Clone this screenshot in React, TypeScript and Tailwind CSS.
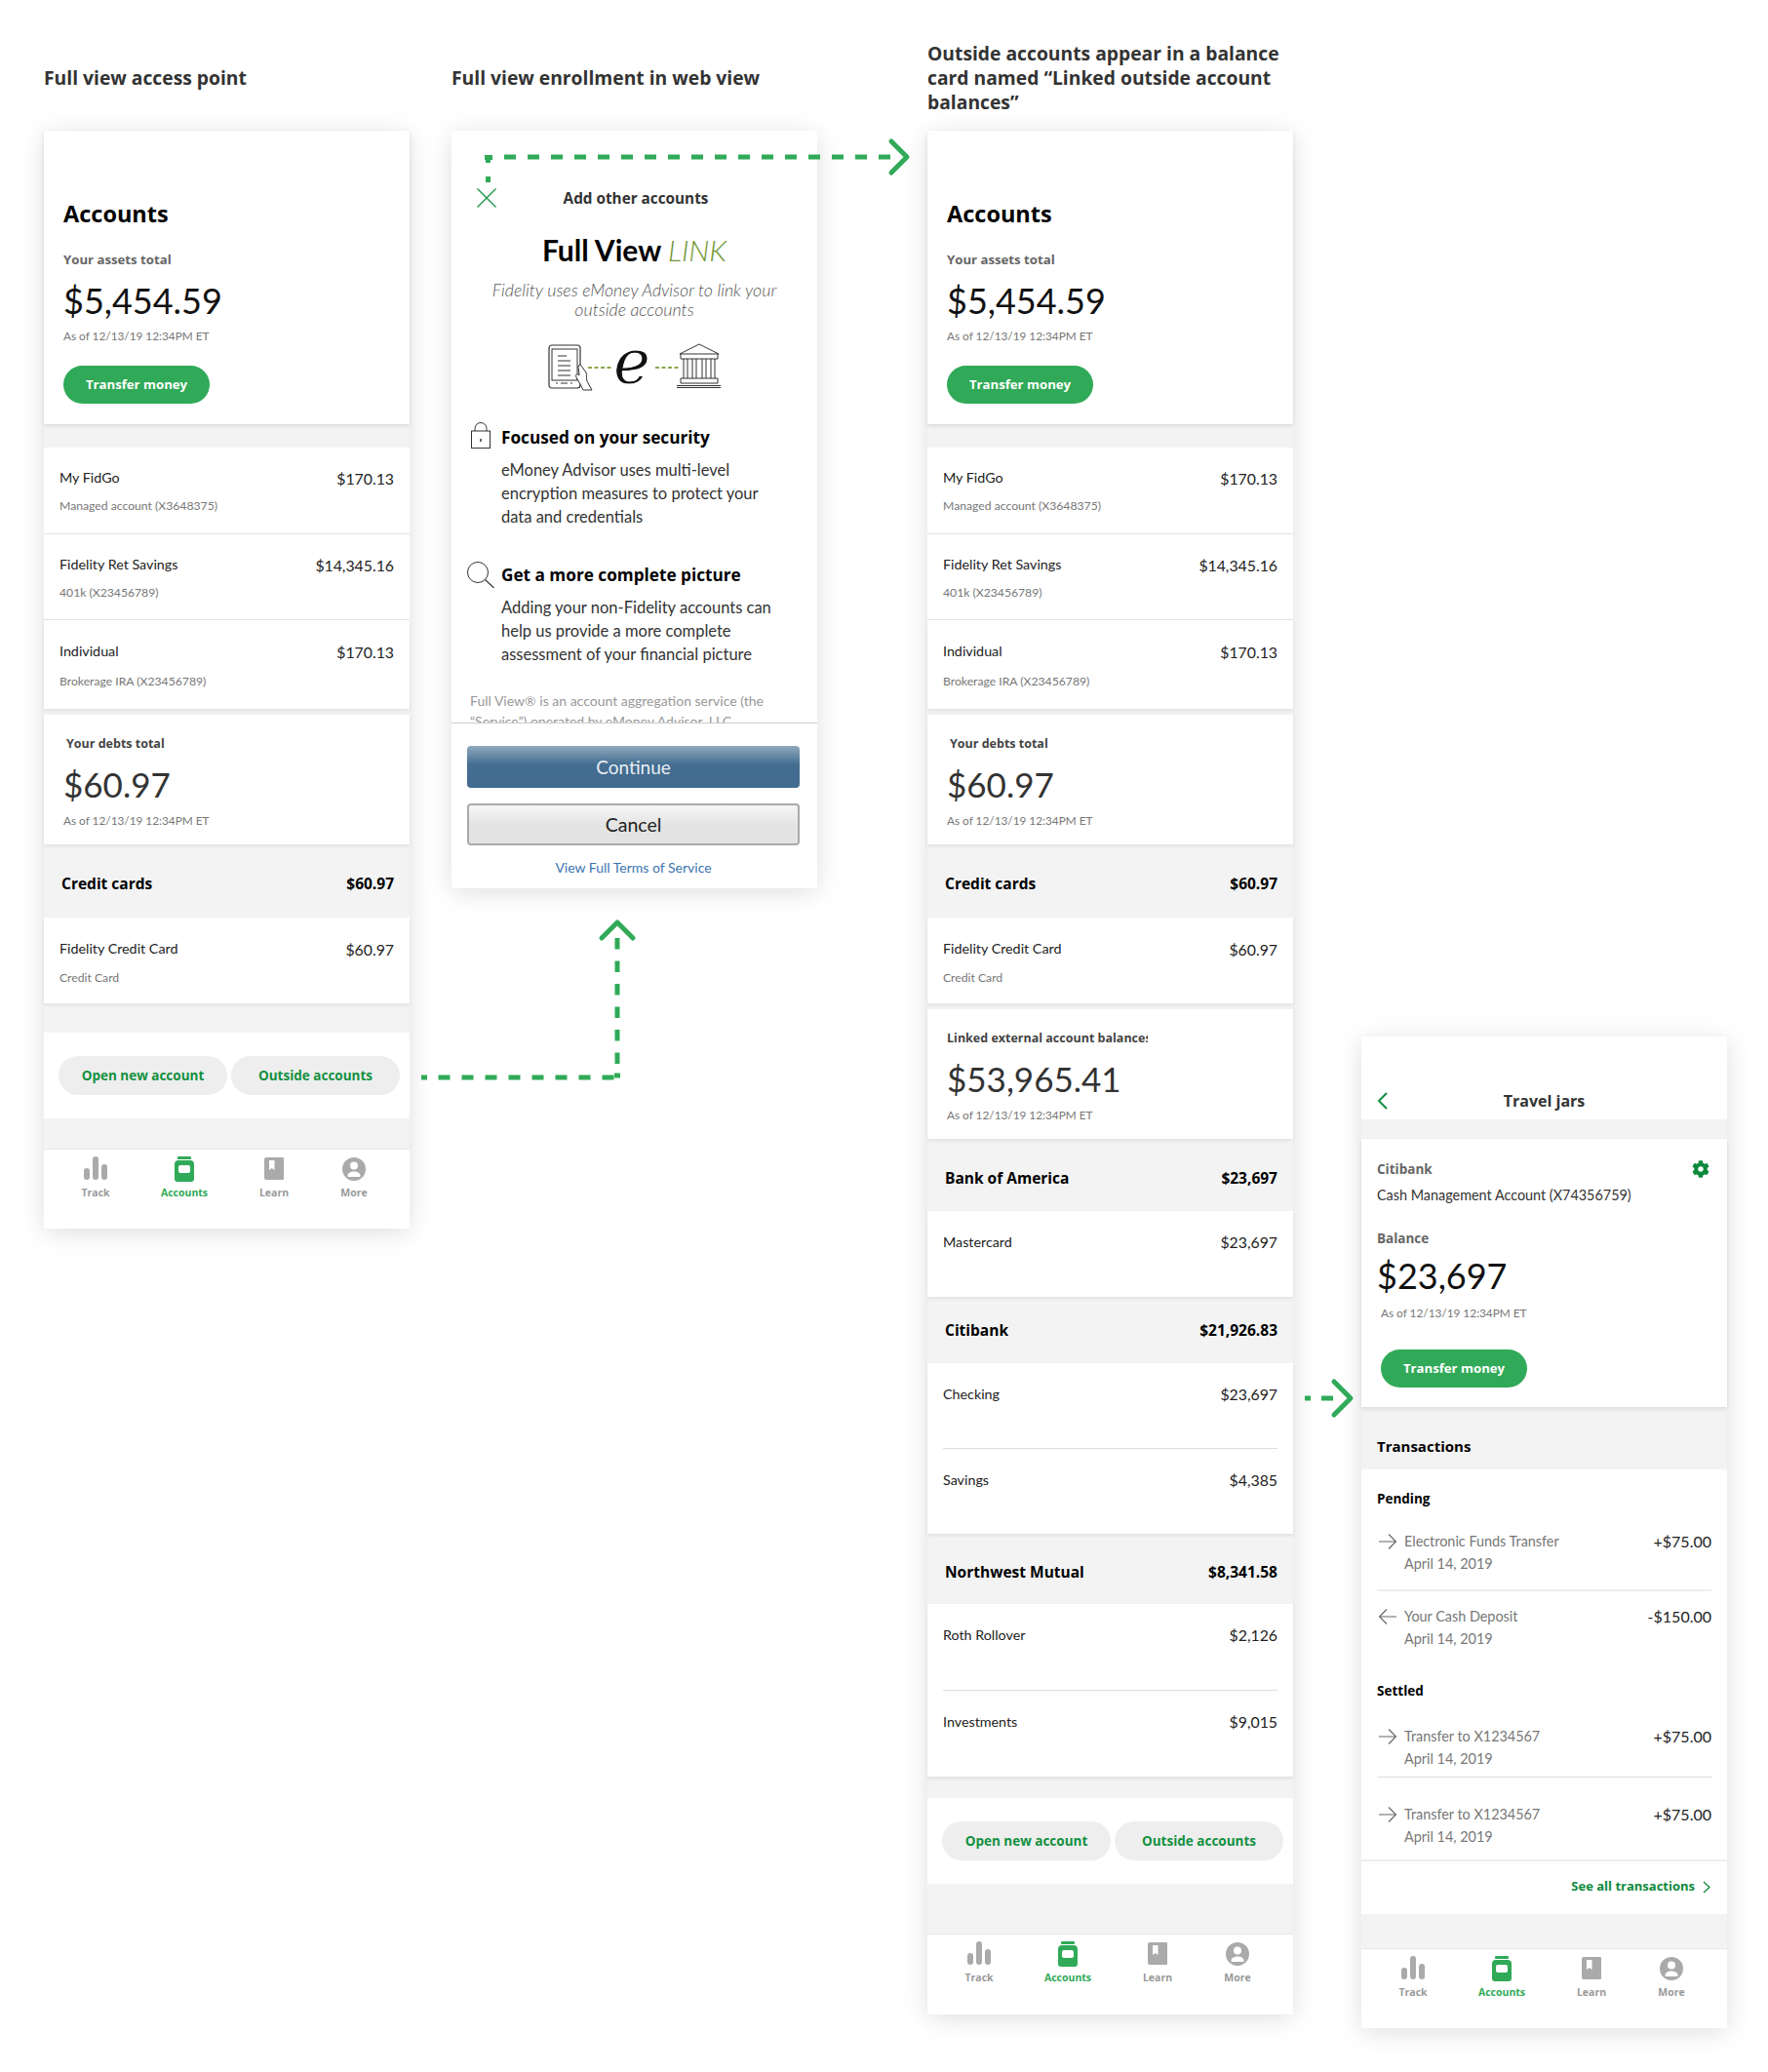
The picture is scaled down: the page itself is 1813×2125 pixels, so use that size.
import { FaCog } from "react-icons/fa";

const Pill = ({ label }: { label: string }) => (
  <button className="h-10 flex-1 rounded-full bg-[#eeeeee] font-['Open_Sans'] text-[13.5px] font-bold text-[#12903f]">{label}</button>
);

const TransferButton = ({ className }: { className: string }) => (
  <button className={`h-[39px] w-[150px] rounded-full bg-[#30aa58] pt-px font-['Open_Sans'] text-[13.2px] font-bold text-white ${className}`}>
    Transfer money
  </button>
);

const Total = ({ label, amount, labelClass, className }: { label: string; amount: string; labelClass: string; className: string }) => (
  <div className={`flex h-[133px] flex-col bg-white pl-5 pt-5 shadow-[0_2px_4px_rgba(0,0,0,0.08)] ${className}`}>
    <p className={`h-5 overflow-hidden whitespace-nowrap font-['Open_Sans'] text-[12.5px] leading-5 font-bold text-[#444444] ${labelClass}`}>{label}</p>
    <p className="mt-[9px] text-[35px] leading-[44px] text-[#333333]">{amount}</p>
    <p className="mt-[7px] text-[11.8px] leading-[18px] text-[#777777]">As of 12/13/19 12:34PM ET</p>
  </div>
);

const AccountRow = ({ name, sub, amount, className, subClass = "mt-[10px]" }: { name: string; sub: string; amount: string; className: string; subClass?: string }) => (
  <div className={`flex justify-between bg-white px-4 ${className}`}>
    <div>
      <p className="text-[14.3px] leading-5 text-[#222222]">{name}</p>
      <p className={`text-[12.2px] leading-[18px] text-[#777777] ${subClass}`}>{sub}</p>
    </div>
    <p className="mt-px text-[15.8px] leading-5 text-[#222222]">{amount}</p>
  </div>
);

const GroupHeader = ({ name, amount, className }: { name: string; amount: string; className: string }) => (
  <div className={`flex items-center justify-between pl-[18px] pr-4 font-['Open_Sans'] text-[15.5px] font-bold text-black ${className}`}>
    <span>{name}</span>
    <span>{amount}</span>
  </div>
);

const SubRows = ({ first, second, className, rowClass, secondClass }: { first: string[]; second: string[]; className: string; rowClass: string; secondClass: string }) => (
  <div className={`bg-white px-4 text-[#222222] shadow-[0_2px_4px_rgba(0,0,0,0.08)] ${className}`}>
    <div className={`flex justify-between border-b border-[#dddddd] pt-[22px] ${rowClass}`}>
      <span className="text-[14.3px] leading-5">{first[0]}</span>
      <span className="text-[15.8px] leading-5">{first[1]}</span>
    </div>
    <div className={`flex justify-between ${secondClass}`}>
      <span className="text-[14.3px] leading-5">{second[0]}</span>
      <span className="text-[15.8px] leading-5">{second[1]}</span>
    </div>
  </div>
);

const TrackIcon = () => (
  <svg width="26" height="26" viewBox="0 0 26 26" fill="#aaaaaa">
    <rect x="1" y="12" width="6" height="12" rx="3" />
    <rect x="10" y="0" width="6" height="24" rx="3" />
    <rect x="19" y="8" width="6" height="16" rx="3" />
  </svg>
);

const JarIcon = () => (
  <svg width="26" height="26" viewBox="0 0 26 26">
    <rect x="6" y="0" width="14" height="3" rx="1" fill="#30aa58" />
    <path fill="#30aa58" fillRule="evenodd" d="M7 4h12a4 4 0 0 1 4 4v15a3 3 0 0 1-3 3H6a3 3 0 0 1-3-3V8a4 4 0 0 1 4-4zM9 9a2 2 0 0 0-2 2v4a2 2 0 0 0 2 2h8a2 2 0 0 0 2-2v-4a2 2 0 0 0-2-2z" />
  </svg>
);

const BookIcon = () => (
  <svg width="26" height="26" viewBox="0 0 26 26">
    <path fill="#aaaaaa" fillRule="evenodd" d="M5 1h17a1 1 0 0 1 1 1v21a1 1 0 0 1-1 1H5a2 2 0 0 1-2-2V3a2 2 0 0 1 2-2zM8 4v10l2.7-2 2.8 2V4z" />
  </svg>
);

const PersonIcon = () => (
  <svg width="26" height="26" viewBox="0 0 26 26">
    <circle cx="13" cy="13" r="12" fill="#aaaaaa" />
    <circle cx="13" cy="9.5" r="4" fill="#ffffff" />
    <path fill="#ffffff" d="M6.5 20c0-3 3-4.500 6.500-4.500s6.500 1.500 6.500 4.500c0 .6-.5 1-1 1H7.500c-.5 0-1-.4-1-1z" />
  </svg>
);

const NavItem = ({ icon, label, active = false }: { icon: React.ReactNode; label: string; active?: boolean }) => (
  <div className="flex flex-col items-center">
    <div className="h-[26px]">{icon}</div>
    <span className={`mt-1 font-['Open_Sans'] text-[10.5px] leading-[14px] font-bold ${active ? "text-[#30aa58]" : "text-[#999999]"}`}>{label}</span>
  </div>
);

const BottomNav = ({ className }: { className: string }) => (
  <div className={`grid grid-cols-[106px_76px_108px_56px] border-t border-[#e8e8e8] bg-white pt-[7px] ${className}`}>
    <NavItem icon={<TrackIcon />} label="Track" />
    <NavItem icon={<JarIcon />} label="Accounts" active />
    <NavItem icon={<BookIcon />} label="Learn" />
    <NavItem icon={<PersonIcon />} label="More" />
  </div>
);

const ActionsRow = ({ className }: { className: string }) => (
  <div className={`flex h-[88px] items-center gap-1 bg-white pl-[15px] pr-[10px] ${className}`}>
    <Pill label="Open new account" />
    <Pill label="Outside accounts" />
  </div>
);

const AccountsTop = () => (
  <>
    <div className="flex h-[301px] flex-col items-start bg-white pl-5 pt-[72px] shadow-[0_2px_4px_rgba(0,0,0,0.1)]">
      <h2 className="font-['Open_Sans'] text-[23.5px] leading-[26px] font-bold text-black">Accounts</h2>
      <p className="mt-6 font-['Open_Sans'] text-[13.2px] leading-5 font-bold text-[#666666]">Your assets total</p>
      <p className="mt-[10px] text-[36px] leading-[44px] text-[#111111]">$5,454.59</p>
      <p className="mt-[6px] text-[11.8px] leading-[18px] text-[#777777]">As of 12/13/19 12:34PM ET</p>
      <TransferButton className="mt-[21px]" />
    </div>
    <AccountRow className="mt-6 h-[89px] border-b border-[#e3e3e3] pt-[21px]" name="My FidGo" sub="Managed account (X3648375)" amount="$170.13" />
    <AccountRow className="h-[88px] border-b border-[#e3e3e3] pt-[21px]" name="Fidelity Ret Savings" sub="401k (X23456789)" amount="$14,345.16" />
    <AccountRow className="h-[91px] pt-[22px] shadow-[0_2px_4px_rgba(0,0,0,0.08)]" name="Individual" sub="Brokerage IRA (X23456789)" amount="$170.13" subClass="mt-[12px]" />
    <Total className="mt-[6px]" label="Your debts total" labelClass="pl-[3px]" amount="$60.97" />
    <GroupHeader className="h-[75px] pt-[7px]" name="Credit cards" amount="$60.97" />
    <AccountRow className="h-[88px] pt-[22px] shadow-[0_2px_4px_rgba(0,0,0,0.08)]" name="Fidelity Credit Card" sub="Credit Card" amount="$60.97" subClass="mt-[11px]" />
  </>
);

const Illustration = () => (
  <svg className="mx-auto mt-[25px] block overflow-visible" width="178" height="50" viewBox="0 0 178 50" fill="none" stroke="#333333" strokeWidth="1">
    <rect x="1" y="2" width="32" height="44" rx="3" strokeWidth="1.2" />
    <rect x="4" y="6" width="26" height="32" />
    <path d="M10 13h9M10 18h13M10 23h13M10 28h13M10 33h13M8 41h2M13 41h7M23 41h2" />
    <path fill="#ffffff" d="M29 35c-1-2 0-4 2-3l1 1-1-9c0-2 2-2 3-1l5 7c1 3 0 6 1 9l5 9H36l-3-6z" />
    <path stroke="#8aa84e" strokeWidth="2" strokeDasharray="4 2.500" d="M41 25h25M110 25h25" />
    <text x="67" y="41" className="font-['DejaVu_Serif'] text-[64px] italic" fill="#111111" stroke="#ffffff" strokeWidth="0.8">e</text>
    <path d="M135 11l20-10 20 10zM136 11v5h38v-5M139 16v20M143 16v20M148 16v20M152 16v20M158 16v20M162 16v20M167 16v20M171 16v20M136 36h38v5h-38zM132 43.500h45M132 45.500h45" />
  </svg>
);

const LockIcon = () => (
  <svg className="mt-[-4px] mr-[11px] shrink-0" width="20" height="27" viewBox="0 0 20 27" fill="none" stroke="#333333" strokeWidth="1">
    <path d="M4 9V6.500a6 6 0 0 1 12 0V9" />
    <rect x="0.500" y="9" width="19" height="17.500" />
    <path strokeWidth="1.500" d="M10 17v3" />
  </svg>
);

const SearchIcon = () => (
  <svg className="mt-[-2px] mr-[7px] shrink-0" width="28" height="27" viewBox="0 0 28 27" fill="none" stroke="#333333" strokeWidth="1">
    <circle cx="11" cy="11" r="10.500" />
    <path strokeWidth="1.200" d="M18.500 18.500l9 8.500" />
  </svg>
);

const EnrollScreen = () => (
  <div className="h-[777px] w-[375px] bg-white shadow-[0_4px_24px_rgba(0,0,0,0.13)]">
    <div className="h-[607px] overflow-hidden">
      <div className="mt-[59px] flex h-5 items-center pl-[26px] pr-[43px]">
        <svg width="20" height="20" viewBox="0 0 20 20" stroke="#12903f" strokeWidth="1.200">
          <path d="M0.500 0.500l19 19M19.500 0.500l-19 19" />
        </svg>
        <h3 className="flex-1 text-center font-['Open_Sans'] text-[15.3px] font-bold text-[#333333]">Add other accounts</h3>
      </div>
      <h1 className="mt-[25px] text-center text-[30px] leading-9 font-bold text-black">
        Full View <span className="font-light italic text-[#6f9433]">LINK</span>
      </h1>
      <p className="mt-[13px] px-[30px] text-center text-[17.8px] leading-5 font-light italic text-[#555555]">
        Fidelity uses eMoney Advisor to link your outside accounts
      </p>
      <Illustration />
      <div className="mt-[35px] flex pl-5">
        <LockIcon />
        <h4 className="font-['Open_Sans'] text-[17.2px] leading-6 font-bold text-black">Focused on your security</h4>
      </div>
      <p className="mt-[9px] pl-[51px] pr-[50px] text-[16.5px] leading-6 text-[#333333]">
        eMoney Advisor uses multi-level encryption measures to protect your data and credentials
      </p>
      <div className="mt-9 flex pl-4">
        <SearchIcon />
        <h4 className="font-['Open_Sans'] text-[17.2px] leading-6 font-bold text-black">Get a more complete picture</h4>
      </div>
      <p className="mt-2 pl-[51px] pr-6 text-[16.5px] leading-6 text-[#333333]">
        Adding your non-Fidelity accounts can help us provide a more complete assessment of your financial picture
      </p>
      <p className="mt-[25px] pl-[19px] pr-9 text-[14px] leading-[21px] text-[#999999]">
        Full View® is an account aggregation service (the “Service”) operated by eMoney Advisor, LLC
      </p>
    </div>
    <div className="flex h-[170px] flex-col border-t border-[#cccccc] pl-4 pr-[18px] pt-[23px]">
      <button className="h-[43px] rounded bg-[linear-gradient(#8fa9bd,#436d91_45%,#426b8f)] pt-px text-[19px] text-[#e8eef3]">Continue</button>
      <button className="mt-4 h-[43px] rounded border-2 border-[#aaaaaa] bg-[linear-gradient(#f6f6f6,#e3e3e3_55%)] pt-px text-[19.500px] text-[#222222]">Cancel</button>
      <a className="mt-[13px] text-center text-[14px] leading-5 text-[#3b73af]">View Full Terms of Service</a>
    </div>
  </div>
);

const TxArrow = ({ flip = false }: { flip?: boolean }) => (
  <svg className={`mt-[3px] ${flip ? "rotate-180" : ""}`} width="18" height="18" viewBox="0 0 18 18" fill="none" stroke="#666666" strokeWidth="1.200">
    <path d="M0 9h17M10 1.500l7.500 7.500-7.500 7.500" />
  </svg>
);

const TxRow = ({ title, amount, flip, className }: { title: string; amount: string; flip?: boolean; className: string }) => (
  <div className={`flex items-start pl-[2px] ${className}`}>
    <div className="w-[26px]">
      <TxArrow flip={flip} />
    </div>
    <div className="flex-1 text-[14.4px] leading-[23px] text-[#777777]">
      <p>{title}</p>
      <p>April 14, 2019</p>
    </div>
    <span className="text-[16px] leading-[23px] text-[#222222]">{amount}</span>
  </div>
);

const JarsScreen = () => (
  <div className="h-[1017px] w-[375px] bg-[#f3f3f3] shadow-[0_4px_24px_rgba(0,0,0,0.13)]">
    <div className="flex h-[85px] items-start bg-white pl-4 pr-[27px] pt-[57px]">
      <svg width="11" height="18" viewBox="0 0 11 18" fill="none" stroke="#12903f" strokeWidth="2">
        <path d="M10 1L2 9l8 8" />
      </svg>
      <h3 className="flex-1 text-center font-['Open_Sans'] text-[16px] leading-[18px] font-bold text-[#333333]">Travel jars</h3>
    </div>
    <div className="mt-5 flex h-[275px] flex-col items-start bg-white pl-4 pt-[21px] shadow-[0_2px_4px_rgba(0,0,0,0.1)]">
      <div className="flex w-full items-center justify-between pr-[18px]">
        <p className="font-['Open_Sans'] text-[13.5px] leading-5 font-bold text-[#666666]">Citibank</p>
        <FaCog className="text-[18px] text-[#0c8a3a]" />
      </div>
      <p className="mt-[7px] text-[14.4px] leading-5 text-[#333333]">Cash Management Account (X74356759)</p>
      <p className="mt-6 font-['Open_Sans'] text-[13.5px] leading-5 font-bold text-[#666666]">Balance</p>
      <p className="mt-[6px] text-[36px] leading-[44px] text-[#111111]">$23,697</p>
      <p className="mt-2 pl-1 text-[11.8px] leading-[18px] text-[#777777]">As of 12/13/19 12:34PM ET</p>
      <TransferButton className="ml-1 mt-7" />
    </div>
    <div className="flex h-[64px] items-center pl-4 pt-4 font-['Open_Sans'] text-[15px] font-bold text-black">Transactions</div>
    <div className="h-[456px] bg-white pt-5">
      <div className="px-4">
        <p className="font-['Open_Sans'] text-[13.5px] leading-5 font-bold text-black">Pending</p>
        <TxRow className="mt-[22px]" title="Electronic Funds Transfer" amount="+$75.00" />
        <div className="mt-[15px] h-[2px] bg-[#eeeeee]" />
        <TxRow className="mt-[14px]" title="Your Cash Deposit" amount="-$150.00" flip />
        <p className="mt-8 font-['Open_Sans'] text-[13.5px] leading-5 font-bold text-black">Settled</p>
        <TxRow className="mt-[25px]" title="Transfer to X1234567" amount="+$75.00" />
        <div className="mt-[7px] h-px bg-[#dddddd]" />
        <TxRow className="mt-[26px]" title="Transfer to X1234567" amount="+$75.00" />
      </div>
      <div className="mt-3 flex h-[54px] items-center justify-end gap-2 border-t-2 border-[#eeeeee] pr-[17px] font-['Open_Sans'] text-[13px] font-bold text-[#0f8a3c]">
        See all transactions
        <svg width="8" height="13" viewBox="0 0 8 13" fill="none" stroke="#0f8a3c" strokeWidth="1.300">
          <path d="M1 1l6 5.500L1 12" />
        </svg>
      </div>
    </div>
    <BottomNav className="mt-[35px] h-[82px]" />
  </div>
);

const Connectors = () => (
  <svg className="pointer-events-none absolute left-0 top-0 h-[2125px] w-[1813px]" viewBox="0 0 1813 2125" fill="none" stroke="#30aa58" strokeWidth="5">
    <path strokeDasharray="12 12" d="M517 161H922" />
    <path d="M497 161.500h8M500.500 159v8M500.500 181v6" />
    <path strokeLinecap="round" strokeLinejoin="round" d="M914 145l16 16-16 16" />

    <path d="M432 1105h6" />
    <path strokeDasharray="12 12" d="M449.500 1105H630" />
    <path d="M630 1103h6" />
    <path strokeDasharray="11.500 12" d="M633 1091V962" />
    <path strokeLinecap="round" strokeLinejoin="round" d="M617 962l16-16 16 16" />

    <path d="M1338 1434h6M1355 1434h12" />
    <path strokeLinecap="round" strokeLinejoin="round" d="M1368 1417l17 17-17 17" />
  </svg>
);

const ColumnTitle = ({ children }: { children: React.ReactNode }) => (
  <div className="flex h-[134px] max-w-[372px] items-center pt-6 font-['Open_Sans'] text-[19.3px] leading-[25px] font-bold text-[#333333]">
    {children}
  </div>
);

export default function App() {
  return (
    <div className="relative flex h-[2125px] w-[1813px] items-start bg-white pl-[45px] font-['Lato'] text-[#333333]">
      <div className="w-[375px]">
        <ColumnTitle>Full view access point</ColumnTitle>
        <div className="h-[1126px] bg-[#f3f3f3] shadow-[0_4px_24px_rgba(0,0,0,0.13)]">
          <AccountsTop />
          <ActionsRow className="mt-[30px]" />
          <BottomNav className="mt-[31px] h-[82px]" />
        </div>
      </div>

      <div className="ml-[43px] w-[375px]">
        <ColumnTitle>Full view enrollment in web view</ColumnTitle>
        <EnrollScreen />
      </div>

      <div className="ml-[113px] w-[375px]">
        <ColumnTitle>Outside accounts appear in a balance card named “Linked outside account balances”</ColumnTitle>
        <div className="h-[1932px] bg-[#f3f3f3] shadow-[0_4px_24px_rgba(0,0,0,0.13)]">
          <AccountsTop />
          <Total className="mt-[6px]" label="Linked external account balances" labelClass="w-[206px]" amount="$53,965.41" />
          <GroupHeader className="h-[74px] pt-[7px]" name="Bank of America" amount="$23,697" />
          <div className="flex h-[88px] justify-between bg-white px-4 pt-[22px] text-[#222222] shadow-[0_2px_4px_rgba(0,0,0,0.08)]">
            <span className="text-[14.3px] leading-5">Mastercard</span>
            <span className="text-[15.8px] leading-5">$23,697</span>
          </div>
          <GroupHeader className="h-[68px] pt-[2px]" name="Citibank" amount="$21,926.83" />
          <SubRows className="h-[175px]" rowClass="h-[88px]" secondClass="pt-[22px]" first={["Checking", "$23,697"]} second={["Savings", "$4,385"]} />
          <GroupHeader className="h-[72px] pt-[7px]" name="Northwest Mutual" amount="$8,341.58" />
          <SubRows className="h-[177px]" rowClass="h-[89px]" secondClass="pt-[22px]" first={["Roth Rollover", "$2,126"]} second={["Investments", "$9,015"]} />
          <ActionsRow className="mt-[22px]" />
          <BottomNav className="mt-[51px] h-[83px]" />
        </div>
      </div>

      <div className="ml-[70px] mt-[1063px]">
        <JarsScreen />
      </div>

      <Connectors />
    </div>
  );
}
